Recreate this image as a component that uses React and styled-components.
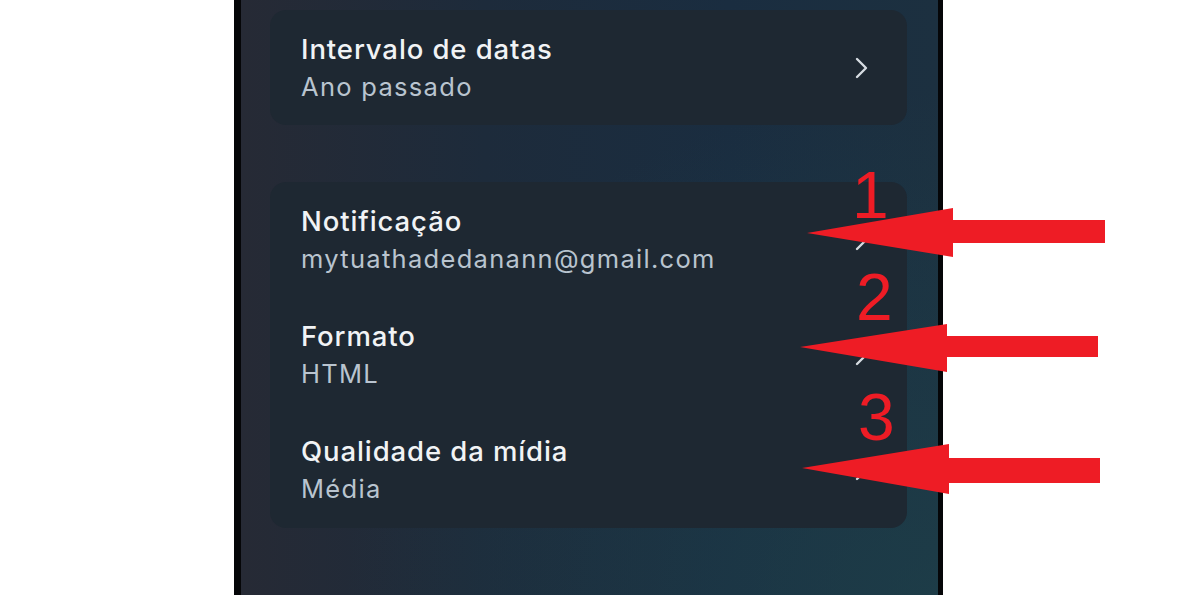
import React from 'react'
import styled, { createGlobalStyle } from 'styled-components'

const GlobalStyle = createGlobalStyle`
  html, body {
    margin: 0;
    padding: 0;
    background: #ffffff;
    font-family: Inter, "Open Sans", sans-serif;
  }
`

const Page = styled.div`
  position: relative;
  width: 1200px;
  height: 600px;
  overflow: hidden;
  background: #ffffff;
`

const Phone = styled.div`
  margin-left: 234px;
  width: 709px;
  height: 595px;
  box-sizing: border-box;
  border-left: 7px solid #050608;
  border-right: 5px solid #050608;
  display: flex;
`

const Screen = styled.div`
  flex: 1;
  padding: 10px 31px 0 29px;
  display: flex;
  flex-direction: column;
  gap: 57px;
  background:
    radial-gradient(ellipse at 100% 100%, rgba(30, 70, 78, 0.55), transparent 60%),
    linear-gradient(90deg, #262a35 0%, #1d2b3b 35%, #1a2d40 70%, #1c3040 100%);
`

const Card = styled.div`
  background: #1e2832;
  border-radius: 16px;
  display: flex;
  flex-direction: column;
`

const Row = styled.div`
  height: ${(props) => props.height || 115}px;
  display: flex;
  align-items: center;
  justify-content: space-between;
  padding: 0 38px 0 31px;
  box-sizing: border-box;
`

const TextBlock = styled.div`
  display: flex;
  flex-direction: column;
  gap: 4px;
`

const Title = styled.div`
  color: #f1f3f5;
  font-size: 27.5px;
  font-weight: 500;
  letter-spacing: 0.9px;
  line-height: 34px;
`

const Subtitle = styled.div`
  color: #b9c4cf;
  font-size: 25.5px;
  font-weight: 400;
  letter-spacing: 1.3px;
  line-height: 34px;
`

const Chevron = () => (
  <svg width="14" height="22" viewBox="0 0 14 22">
    <polyline points="2,2 11,11 2,20" fill="none" stroke="#d6dce2" strokeWidth="2.4" strokeLinecap="round" strokeLinejoin="round" />
  </svg>
)

const Overlay = styled.svg`
  position: absolute;
  left: 0;
  top: 0;
  pointer-events: none;
`

const Number = styled.text`
  font-family: "Liberation Sans", Arial, sans-serif;
  font-size: 66px;
  fill: #ee1c25;
`

const arrows = [
  { tipX: 807, tipY: 233, baseX: 953, headTop: 208, headBottom: 257, shaftTop: 220, shaftBottom: 243, endX: 1105 },
  { tipX: 800, tipY: 347, baseX: 947, headTop: 324, headBottom: 372, shaftTop: 336, shaftBottom: 357, endX: 1098 },
  { tipX: 802, tipY: 468, baseX: 949, headTop: 444, headBottom: 494, shaftTop: 458, shaftBottom: 483, endX: 1100 },
]

const numbers = [
  { label: '1', x: 852, y: 218 },
  { label: '2', x: 856, y: 320 },
  { label: '3', x: 858, y: 440 },
]

const rows = [
  { title: 'Notificação', value: 'mytuathadedanann@gmail.com' },
  { title: 'Formato', value: 'HTML' },
  { title: 'Qualidade da mídia', value: 'Média' },
]

const App = () => (
  <Page>
    <GlobalStyle />
    <Phone>
      <Screen>
        <Card>
          <Row>
            <TextBlock>
              <Title>Intervalo de datas</Title>
              <Subtitle>Ano passado</Subtitle>
            </TextBlock>
            <Chevron />
          </Row>
        </Card>
        <Card>
          {rows.map((row) => (
            <Row key={row.title} height={115.3}>
              <TextBlock>
                <Title>{row.title}</Title>
                <Subtitle>{row.value}</Subtitle>
              </TextBlock>
              <Chevron />
            </Row>
          ))}
        </Card>
      </Screen>
    </Phone>
    <Overlay width="1200" height="600" viewBox="0 0 1200 600">
      {arrows.map((a, i) => (
        <polygon
          key={i}
          fill="#ee1c25"
          points={`${a.tipX},${a.tipY} ${a.baseX},${a.headTop} ${a.baseX},${a.shaftTop} ${a.endX},${a.shaftTop} ${a.endX},${a.shaftBottom} ${a.baseX},${a.shaftBottom} ${a.baseX},${a.headBottom}`}
        />
      ))}
      {numbers.map((n) => (
        <Number key={n.label} x={n.x} y={n.y}>{n.label}</Number>
      ))}
    </Overlay>
  </Page>
)

export default App
